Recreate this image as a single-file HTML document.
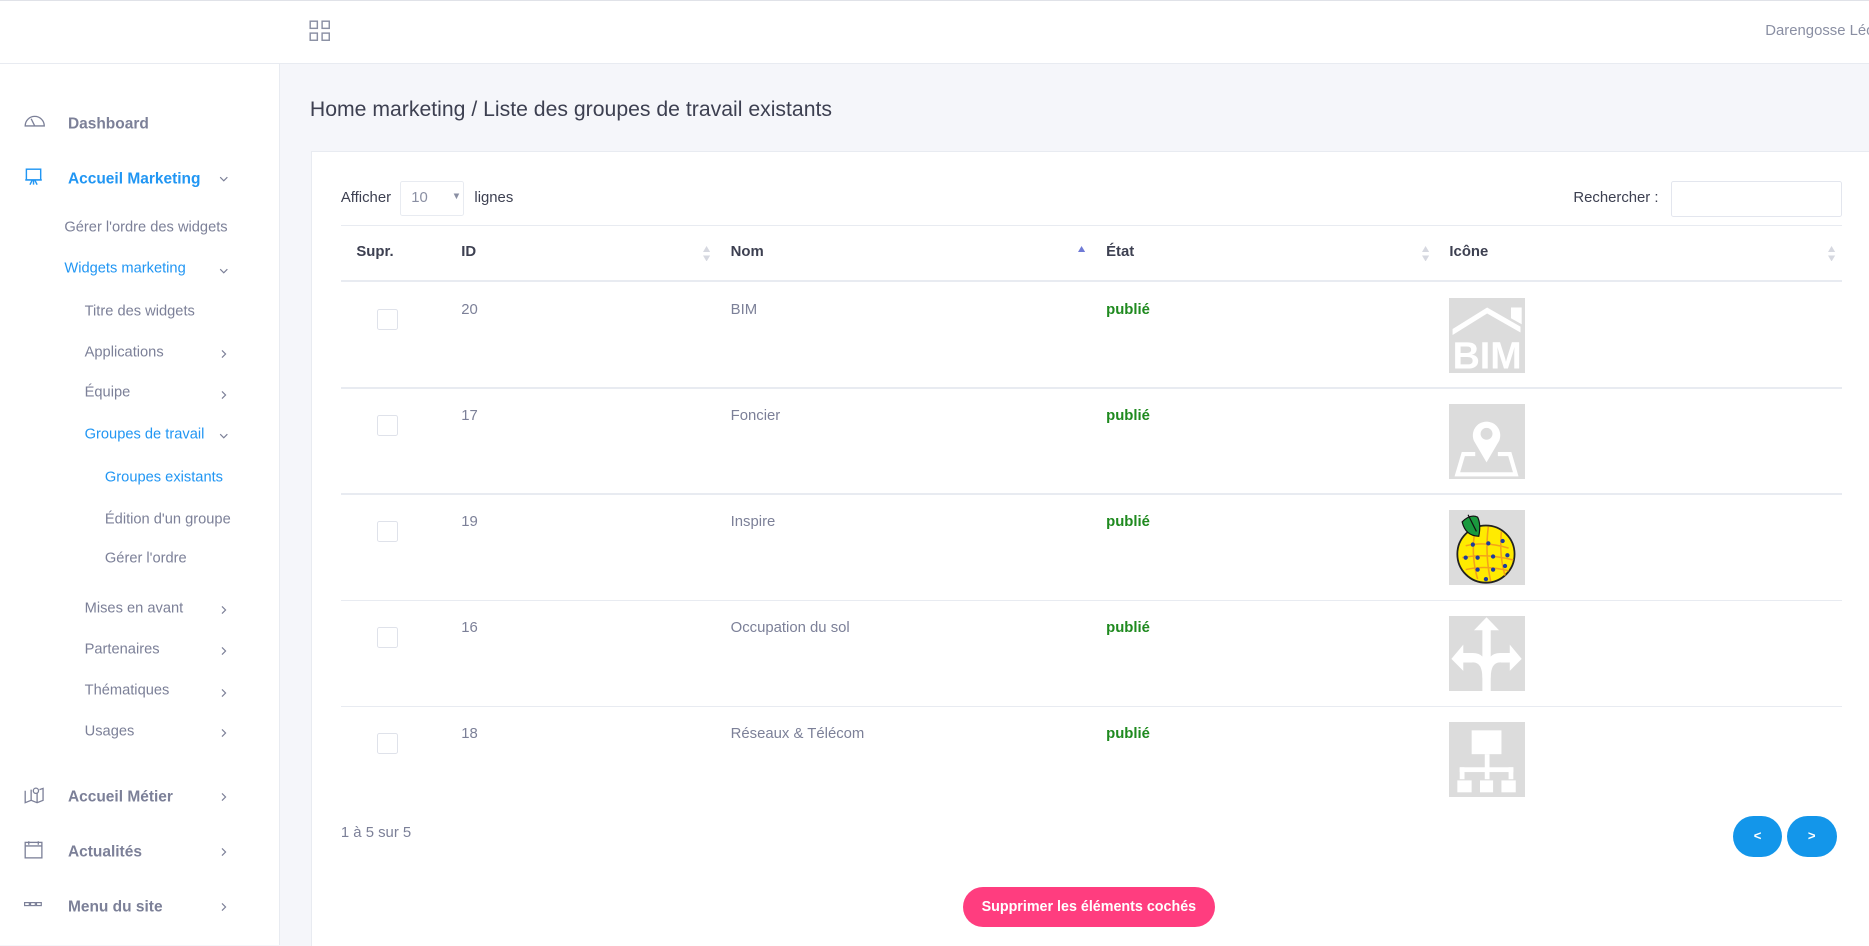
<!DOCTYPE html>
<html><head><meta charset="utf-8"><style>
html,body{margin:0;padding:0;}
body{width:1869px;height:945px;overflow:hidden;background:#f5f6fa;}
#w{zoom:1.19196;position:relative;width:1568px;height:793px;font-family:"Liberation Sans",Arial,sans-serif;color:#7c8098;}
.a{position:absolute;white-space:nowrap;}
.top{left:0;top:0;width:1568px;height:54px;background:#fff;border-top:1px solid #e0e2e8;border-bottom:1px solid #e8ebf1;box-sizing:border-box;}
.side{left:0;top:54px;width:234px;height:739px;background:#fff;border-right:1px solid #e8ebf1;}
.s{font-size:12.3px;line-height:16px;transform:translateY(-8px);}
.t{font-size:13px;font-weight:bold;line-height:16px;transform:translateY(-8px);}
.blue{color:#2196f3;}
.chev{position:absolute;left:184px;width:8px;height:8px;transform:translateY(-4px);}
.card{left:261px;top:127px;width:1307px;height:666px;background:#fff;border-left:1px solid #e8ebf1;border-top:1px solid #e8ebf1;}
.line{position:absolute;left:286px;width:1259px;height:1px;background:#e8ebf1;}
.th{font-size:12.5px;font-weight:bold;color:#3d4051;}
.cb{position:absolute;left:316px;width:16px;height:16px;border:1px solid #dfe2ea;border-radius:2px;background:#fff;}
.ic{position:absolute;left:1216px;width:63px;height:63px;background:#dcdcdc;}
.pub{color:#1f8a1f;font-weight:bold;font-size:12.5px;}
.srt{position:absolute;width:6px;}
</style></head><body><div id="w">
<div class="a top"></div>
<svg class="a" style="left:259px;top:17px" width="18" height="18" viewBox="0 0 18 18" fill="none" stroke="#8a8fa3" stroke-width="1.2"><rect x="1" y="1" width="6" height="6"/><rect x="11" y="1" width="6" height="6"/><rect x="1" y="11" width="6" height="6"/><rect x="11" y="11" width="6" height="6"/></svg>
<div class="a" style="left:1481px;top:19px;font-size:12.5px;color:#8a8fa3">Darengosse Léo</div>
<div class="a side"></div>

<svg class="a" style="left:20px;top:96px" width="18" height="12" viewBox="0 0 18 12" fill="none" stroke="#7c8098" stroke-width="1.1"><path d="M1 10 A8 8 0 0 1 17 10 Z"/><path d="M9 10 L6 4"/></svg>
<div class="a t" style="left:57px;top:104px">Dashboard</div>
<svg class="a" style="left:20px;top:141px" width="16" height="15" viewBox="0 0 16 15" fill="none" stroke="#2196f3" stroke-width="1.2"><rect x="2" y="1" width="12" height="9"/><path d="M1 10h14M5 14l2-4M11 14l-2-4M8 10v4"/></svg>
<div class="a t blue" style="left:57px;top:150px">Accueil Marketing</div>
<svg class="chev" style="top:150px" viewBox="0 0 8 8" fill="none" stroke="#7c8098"><path d="M1 2.5l3 3 3-3"/></svg>
<div class="a s" style="left:54px;top:191px">Gérer l'ordre des widgets</div>
<div class="a s blue" style="left:54px;top:226px">Widgets marketing</div>
<svg class="chev" style="top:227px" viewBox="0 0 8 8" fill="none" stroke="#7c8098"><path d="M1 2.5l3 3 3-3"/></svg>
<div class="a s" style="left:71px;top:262px">Titre des widgets</div>
<div class="a s" style="left:71px;top:296px">Applications</div>
<svg class="chev" style="top:297px" viewBox="0 0 8 8" fill="none" stroke="#7c8098"><path d="M2.5 1l3 3-3 3"/></svg>
<div class="a s" style="left:71px;top:330px">Équipe</div>
<svg class="chev" style="top:331px" viewBox="0 0 8 8" fill="none" stroke="#7c8098"><path d="M2.5 1l3 3-3 3"/></svg>
<div class="a s blue" style="left:71px;top:365px">Groupes de travail</div>
<svg class="chev" style="top:366px" viewBox="0 0 8 8" fill="none" stroke="#7c8098"><path d="M1 2.5l3 3 3-3"/></svg>
<div class="a s blue" style="left:88px;top:401px">Groupes existants</div>
<div class="a s" style="left:88px;top:436px">Édition d'un groupe</div>
<div class="a s" style="left:88px;top:469px">Gérer l'ordre</div>
<div class="a s" style="left:71px;top:511px">Mises en avant</div>
<svg class="chev" style="top:512px" viewBox="0 0 8 8" fill="none" stroke="#7c8098"><path d="M2.5 1l3 3-3 3"/></svg>
<div class="a s" style="left:71px;top:545px">Partenaires</div>
<svg class="chev" style="top:546px" viewBox="0 0 8 8" fill="none" stroke="#7c8098"><path d="M2.5 1l3 3-3 3"/></svg>
<div class="a s" style="left:71px;top:580px">Thématiques</div>
<svg class="chev" style="top:581px" viewBox="0 0 8 8" fill="none" stroke="#7c8098"><path d="M2.5 1l3 3-3 3"/></svg>
<div class="a s" style="left:71px;top:614px">Usages</div>
<svg class="chev" style="top:615px" viewBox="0 0 8 8" fill="none" stroke="#7c8098"><path d="M2.5 1l3 3-3 3"/></svg>
<svg class="a" style="left:20px;top:659px" width="17" height="16" viewBox="0 0 17 16" fill="none" stroke="#7c8098" stroke-width="1.1"><path d="M1 4v10l5-2 5 2 5-2V2l-3 1"/><path d="M6 3v9M11 6v8"/><circle cx="10" cy="4" r="2.2"/></svg>
<div class="a t" style="left:57px;top:669px">Accueil Métier</div>
<svg class="chev" style="top:669px" viewBox="0 0 8 8" fill="none" stroke="#7c8098"><path d="M2.5 1l3 3-3 3"/></svg>
<svg class="a" style="left:20px;top:705px" width="16" height="16" viewBox="0 0 16 16" fill="none" stroke="#7c8098" stroke-width="1.1"><rect x="1" y="2" width="14" height="13"/><path d="M1 5h14M4 1v3M12 1v3"/></svg>
<div class="a t" style="left:57px;top:715px">Actualités</div>
<svg class="chev" style="top:715px" viewBox="0 0 8 8" fill="none" stroke="#7c8098"><path d="M2.5 1l3 3-3 3"/></svg>
<svg class="a" style="left:20px;top:757px" width="16" height="4" viewBox="0 0 16 4" fill="none" stroke="#7c8098" stroke-width="1"><rect x="0.5" y="0.5" width="4" height="2.5"/><rect x="5.5" y="0.5" width="4" height="2.5"/><rect x="10.5" y="0.5" width="4" height="2.5"/></svg>
<div class="a t" style="left:57px;top:761px">Menu du site</div>
<svg class="chev" style="top:761px" viewBox="0 0 8 8" fill="none" stroke="#7c8098"><path d="M2.5 1l3 3-3 3"/></svg>

<div class="a" style="left:260px;top:82px;font-size:17.8px;color:#3d4051">Home marketing / Liste des groupes de travail existants</div>
<div class="a card"></div>
<div class="a" style="left:286px;top:159px;font-size:12.5px;color:#3d4051">Afficher</div>
<div class="a" style="left:336px;top:152px;width:53px;height:29px;border:1px solid #e8ebf1;box-sizing:border-box;border-radius:2px"></div>
<div class="a" style="left:345px;top:159px;font-size:12.5px;color:#8a8fa3">10</div>
<div class="a" style="left:379px;top:160px;font-size:8px;color:#8a8fa3">▼</div>
<div class="a" style="left:398px;top:159px;font-size:12.5px;color:#3d4051">lignes</div>
<div class="a" style="left:1320px;top:159px;font-size:12.5px;color:#3d4051">Rechercher :</div>
<div class="a" style="left:1402px;top:152px;width:143px;height:30px;border:1px solid #e3e6ee;box-sizing:border-box;border-radius:2px"></div>
<div class="line" style="top:189px"></div>
<div class="a th" style="left:299px;top:205px">Supr.</div>
<div class="a th" style="left:387px;top:205px">ID</div>
<div class="a th" style="left:613px;top:205px">Nom</div>
<div class="a th" style="left:928px;top:205px">État</div>
<div class="a th" style="left:1216px;top:205px">Icône</div>
<svg class="srt" style="left:590px;top:206px" height="13" viewBox="0 0 6 13" fill="#d6d8e0"><path d="M0 5l3-5 3 5zM0 8l3 5 3-5z"/></svg>
<svg class="srt" style="left:904px;top:206px" height="13" viewBox="0 0 6 13" fill="#6f7ad6"><path d="M0 5l3-5 3 5z"/></svg>
<svg class="srt" style="left:1193px;top:206px" height="13" viewBox="0 0 6 13" fill="#d6d8e0"><path d="M0 5l3-5 3 5zM0 8l3 5 3-5z"/></svg>
<svg class="srt" style="left:1534px;top:206px" height="13" viewBox="0 0 6 13" fill="#d6d8e0"><path d="M0 5l3-5 3 5zM0 8l3 5 3-5z"/></svg>
<div class="line" style="top:235px;height:2px"></div>

<div class="cb" style="top:259px"></div>
<div class="a" style="left:387px;top:253px;font-size:12.5px">20</div>
<div class="a" style="left:613px;top:253px;font-size:12.5px">BIM</div>
<div class="a pub" style="left:928px;top:253px">publié</div>
<div class="ic" style="top:250px"><svg width="63" height="63" viewBox="0 0 63 63"><path d="M3 26L32 8 60 24V29L32 13 3 31Z" fill="#fff"/><path d="M52 8H61V22L52 17Z" fill="#fff"/><text x="32" y="59" text-anchor="middle" font-family="Liberation Sans" font-weight="bold" font-size="32" fill="#fff" textLength="58" lengthAdjust="spacingAndGlyphs">BIM</text></svg></div>
<div class="line" style="top:325px"></div>

<div class="cb" style="top:348px"></div>
<div class="a" style="left:387px;top:342px;font-size:12.5px">17</div>
<div class="a" style="left:613px;top:342px;font-size:12.5px">Foncier</div>
<div class="a pub" style="left:928px;top:342px">publié</div>
<div class="ic" style="top:339px"><svg width="63" height="63" viewBox="0 0 63 63" fill="none" stroke="#fff" stroke-width="3.5"><path d="M22 42H12L7 59H56L51 42H41"/><path d="M31.5 49L21 31A11.5 11.5 0 1 1 42 31Z" fill="#fff" stroke="none"/><circle cx="31.5" cy="25" r="5" fill="#dcdcdc" stroke="none"/></svg></div>
<div class="line" style="top:414px"></div>

<div class="cb" style="top:437px"></div>
<div class="a" style="left:387px;top:431px;font-size:12.5px">19</div>
<div class="a" style="left:613px;top:431px;font-size:12.5px">Inspire</div>
<div class="a pub" style="left:928px;top:431px">publié</div>
<div class="ic" style="top:428px"><svg width="63" height="63" viewBox="0 0 63 63"><circle cx="31" cy="37" r="24" fill="#ffeb00" stroke="#222" stroke-width="1.5"/><path d="M14 30Q31 26 50 32M11 40Q31 36 54 42M14 50Q31 46 50 51M22 16Q18 37 24 58M33 14Q30 37 35 60M44 18Q42 38 47 55" stroke="#f4a21a" fill="none" stroke-width="1.3"/><g fill="#1d3c9c"><circle cx="20" cy="29" r="1.8"/><circle cx="33" cy="28" r="1.8"/><circle cx="45" cy="26" r="1.8"/><circle cx="24" cy="40" r="1.8"/><circle cx="37" cy="39" r="1.8"/><circle cx="49" cy="38" r="1.8"/><circle cx="14" cy="40" r="1.8"/><circle cx="24" cy="50" r="1.8"/><circle cx="37" cy="50" r="1.8"/><circle cx="47" cy="47" r="1.8"/><circle cx="31" cy="58" r="1.8"/></g><path d="M11 10Q18 3 24 6Q27 12 25 22Q14 22 11 10Z" fill="#1a9a3e" stroke="#111" stroke-width="1"/><path d="M16 4L23 18" stroke="#111" stroke-width="1"/></svg></div>
<div class="line" style="top:503px"></div>

<div class="cb" style="top:526px"></div>
<div class="a" style="left:387px;top:520px;font-size:12.5px">16</div>
<div class="a" style="left:613px;top:520px;font-size:12.5px">Occupation du sol</div>
<div class="a pub" style="left:928px;top:520px">publié</div>
<div class="ic" style="top:517px"><svg width="63" height="63" viewBox="0 0 63 63" fill="#fff"><path d="M31.5 1L21 12H28V63H35V12H42Z"/><path d="M2 36L12 24V31H20Q31 31 31.5 44L28 52Q28 38 19 39H12V46Z"/><path d="M61 36L51 24V31H43Q32 31 31.5 44L35 52Q35 38 44 39H51V46Z"/></svg></div>
<div class="line" style="top:592px"></div>

<div class="cb" style="top:615px"></div>
<div class="a" style="left:387px;top:609px;font-size:12.5px">18</div>
<div class="a" style="left:613px;top:609px;font-size:12.5px">Réseaux &amp; Télécom</div>
<div class="a pub" style="left:928px;top:609px">publié</div>
<div class="ic" style="top:606px"><svg width="63" height="63" viewBox="0 0 63 63" fill="#fff"><rect x="19" y="7" width="25" height="20"/><rect x="30" y="27" width="4" height="13"/><rect x="9" y="38" width="45" height="4"/><rect x="9" y="38" width="4" height="10"/><rect x="30" y="38" width="4" height="10"/><rect x="50" y="38" width="4" height="10"/><rect x="7" y="49" width="12" height="10"/><rect x="26" y="49" width="11" height="10"/><rect x="44" y="49" width="12" height="10"/></svg></div>

<div class="a" style="left:286px;top:692px;font-size:12.5px">1 à 5 sur 5</div>
<div class="a" style="left:1454px;top:685px;width:41px;height:34px;border-radius:20px;background:#1396ea;color:#fff;font-size:11px;font-weight:bold;text-align:center;line-height:34px">&lt;</div>
<div class="a" style="left:1499px;top:685px;width:42px;height:34px;border-radius:20px;background:#1396ea;color:#fff;font-size:11px;font-weight:bold;text-align:center;line-height:34px">&gt;</div>
<div class="a" style="left:808px;top:744px;width:211px;height:34px;border-radius:17px;background:#ff3d7f;color:#fff;font-size:12px;font-weight:bold;text-align:center;line-height:34px">Supprimer les éléments cochés</div>
</div></body></html>
